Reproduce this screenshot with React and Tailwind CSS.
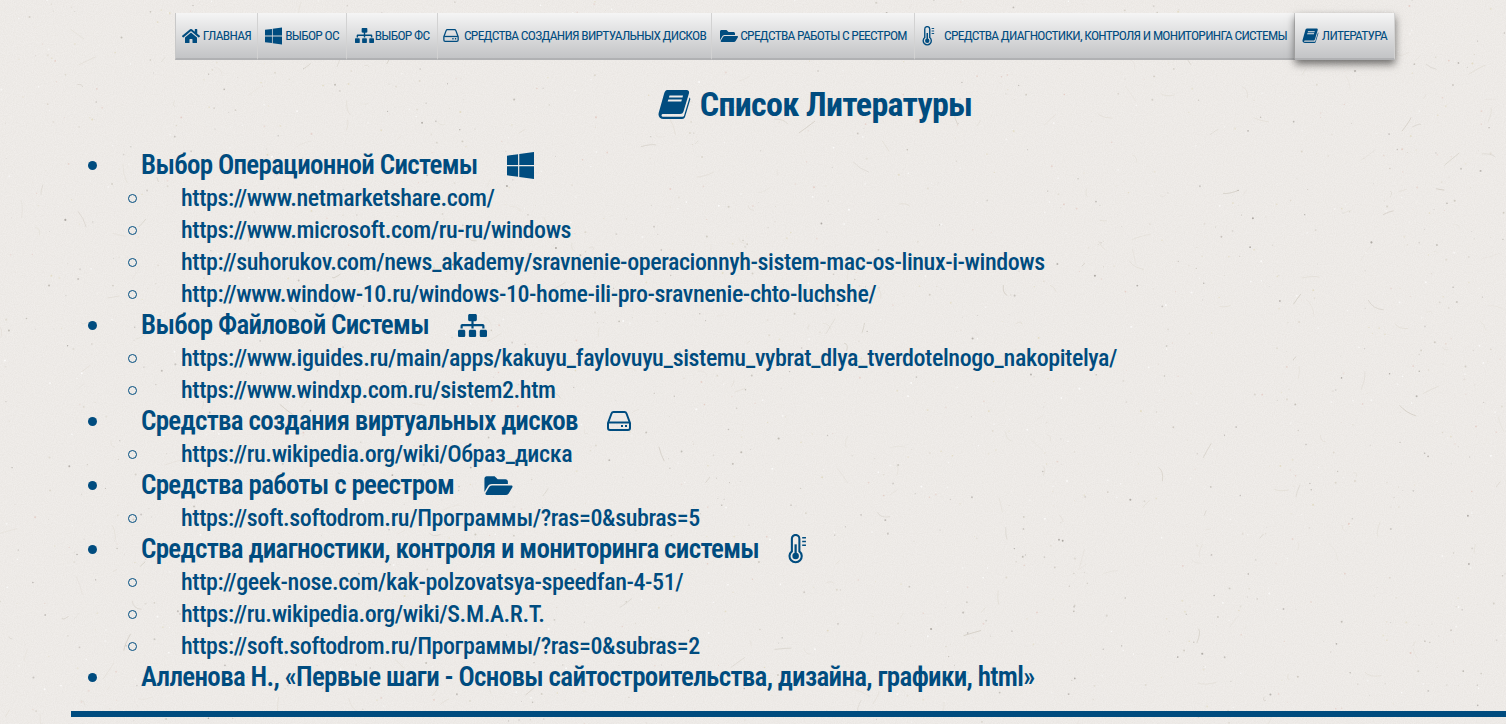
import React from "react";
import { FaHome, FaWindows, FaSitemap, FaFolderOpen } from "react-icons/fa";

const Book = ({ className }) => (
  <svg viewBox="0 0 32 30" className={className} fill="currentColor">
    <path d="M9 1h19c2 0 3 1.400 2.500 3.200L25 22.500c-.5 1.700-1.700 2.500-3.500 2.500H5c-1.200 0-2 .5-2 1.400 0 .9.800 1.300 2 1.300h19c.8 0 1.300-.4 1.600-1.200L31 8.500c.6.400 1 1.200.7 2.300L26.500 28c-.4 1.300-1.500 2-2.900 2H5C2 30 0 28 0 25.500c0-.7.100-1.300.3-2L5.500 5C6.100 2.700 7 1 9 1z" />
    <path fill="#efecea" d="M11 6.500h13.500l-.5 2H10.400zM9.800 10.500h13.600l-.6 2H9.200z" />
  </svg>
);

const Hdd = ({ className }) => (
  <svg viewBox="0 0 24 20" className={className} fill="none" stroke="currentColor">
    <path strokeWidth="2" strokeLinejoin="round" d="M1 12 4.500 2.500C4.900 1.500 5.600 1 6.500 1h11c.9 0 1.600.5 2 1.500L23 12v5c0 1.200-.8 2-2 2H3c-1.200 0-2-.8-2-2z" />
    <path strokeWidth="2" d="M1.500 11.500h21" />
    <path strokeWidth="2" d="M14 15h2M18 15h2" />
  </svg>
);

const Thermo = ({ className }) => (
  <svg viewBox="0 0 20 32" className={className} fill="none" stroke="currentColor">
    <path strokeWidth="2.200" d="M4 18.500V5a4 4 0 0 1 8 0v13.500a6.500 6.500 0 1 1-8 0z" />
    <circle cx="8" cy="23.500" r="3.500" fill="currentColor" stroke="none" />
    <path strokeWidth="2.400" d="M8 23V11" />
    <path strokeWidth="1.500" d="M15 4h4M15 8h4M15 12h4" />
  </svg>
);

function makeTexture() {
  let s = 12345;
  const r = () => ((s = (s * 16807) % 2147483647) / 2147483647);
  const specks = [];
  const fibres = [];
  const tones = ["#c9c4ba", "#d8d2c6", "#e0d8bc", "#b5b0a8", "#ffffff", "#ffffff", "#e3c8c0", "#9f9a94"];
  for (let i = 0; i < 2200; i++) {
    specks.push({ x: r() * 1506, y: r() * 724, d: 0.35 + r() * 0.7, c: tones[Math.floor(r() * tones.length)], o: 0.35 + r() * 0.5 });
  }
  for (let i = 0; i < 300; i++) {
    const x = r() * 1506, y = r() * 724, a = r() * Math.PI * 2, l = 4 + r() * 16, b = (r() - 0.5) * 8;
    const ex = x + Math.cos(a) * l, ey = y + Math.sin(a) * l;
    fibres.push({ d: `M${x.toFixed(1)} ${y.toFixed(1)}Q${((x + ex) / 2 + b).toFixed(1)} ${((y + ey) / 2 - b).toFixed(1)} ${ex.toFixed(1)} ${ey.toFixed(1)}`, c: r() > 0.3 ? "#dfdad1" : "#c9c3b8", o: 0.35 + r() * 0.45 });
  }
  return { specks, fibres };
}
const tex = makeTexture();

const Paper = () => (
  <svg className="absolute inset-0 w-full h-full" width="1506" height="724" aria-hidden="true">
    <filter id="grain">
      <feTurbulence type="fractalNoise" baseFrequency="0.9" numOctaves="2" seed="4" />
      <feColorMatrix values="0 0 0 0 0.62  0 0 0 0 0.59  0 0 0 0 0.55  0 0 0 0.35 -0.09" />
    </filter>
    <rect width="1506" height="724" filter="url(#grain)" />
    {tex.fibres.map((f, i) => (
      <path key={i} d={f.d} fill="none" stroke={f.c} strokeOpacity={f.o} strokeWidth="0.8" />
    ))}
    {tex.specks.map((p, i) => (
      <circle key={i} cx={p.x} cy={p.y} r={p.d} fill={p.c} fillOpacity={p.o} />
    ))}
  </svg>
);

const font = { fontFamily: '"Liberation Sans Narrow","Roboto Condensed","Liberation Sans",sans-serif' };

const nav = [
  { t: "Главная", w: "w-[83px]", I: FaHome, ic: "w-[18px] h-[16px]", gap: "gap-[3px]" },
  { t: "Выбор ОС", w: "w-[89px]", I: FaWindows, ic: "w-[17px] h-[20px]", gap: "gap-[3px]" },
  { t: "Выбор ФС", w: "w-[91px]", I: FaSitemap, ic: "w-[19px] h-[17px]", gap: "gap-[1px]" },
  { t: "Средства создания виртуальных дисков", w: "w-[274px]", I: Hdd, ic: "w-[16px] h-[13px]", gap: "gap-[5px]" },
  { t: "Средства работы с реестром", w: "w-[203px]", I: FaFolderOpen, ic: "w-[20px] h-[16px]", gap: "gap-[1px]" },
  { t: "Средства диагностики, контроля и мониторинга системы", w: "w-[380px]", I: Thermo, ic: "w-[13px] h-[20px]", gap: "gap-[9px]" },
  { t: "Литература", w: "w-[100px]", I: Book, ic: "w-[17px] h-[15px]", gap: "gap-[3px]", active: true },
];

const list = [
  { t: "Выбор Операционной Системы", I: FaWindows, ic: "w-[27px] h-[31px]", links: ["https://www.netmarketshare.com/", "https://www.microsoft.com/ru-ru/windows", "http://suhorukov.com/news_akademy/sravnenie-operacionnyh-sistem-mac-os-linux-i-windows", "http://www.window-10.ru/windows-10-home-ili-pro-sravnenie-chto-luchshe/"] },
  { t: "Выбор Файловой Системы", I: FaSitemap, ic: "w-[29px] h-[25px]", links: ["https://www.iguides.ru/main/apps/kakuyu_faylovuyu_sistemu_vybrat_dlya_tverdotelnogo_nakopitelya/", "https://www.windxp.com.ru/sistem2.htm"] },
  { t: "Средства создания виртуальных дисков", I: Hdd, ic: "w-[24px] h-[20px]", links: ["https://ru.wikipedia.org/wiki/Образ_диска"] },
  { t: "Средства работы с реестром", I: FaFolderOpen, ic: "w-[31px] h-[25px]", links: ["https://soft.softodrom.ru/Программы/?ras=0&subras=5"] },
  { t: "Средства диагностики, контроля и мониторинга системы", I: Thermo, ic: "w-[19px] h-[30px]", links: ["http://geek-nose.com/kak-polzovatsya-speedfan-4-51/", "https://ru.wikipedia.org/wiki/S.M.A.R.T.", "https://soft.softodrom.ru/Программы/?ras=0&subras=2"] },
  { t: "Алленова Н., «Первые шаги - Основы сайтостроительства, дизайна, графики, html»", links: [] },
];

export default function App() {
  return (
    <div style={font} className="relative h-[724px] overflow-hidden bg-[#f0edea] text-[#004c7f]">
      <Paper />
      <div className="relative">
        <nav className="ml-[175px] pt-[13px] flex w-[1220px]">
          {nav.map(({ t, w, I, ic, gap, active }, i) => (
            <div key={t} className={`${w} h-[47px] flex items-center justify-center ${gap} text-[13.5px] tracking-[-0.72px] uppercase whitespace-nowrap bg-gradient-to-b from-[#f5f5f5] to-[#c3c4c6] border-b-2 border-b-[#b0b1b3] border-r border-r-[#d2d2d2] ${i === 0 ? "border-l border-l-[#c8c8c8]" : ""} ${active ? "shadow-[0_4px_8px_rgba(0,0,0,0.55)]" : ""}`}>
              <I className={`${ic} shrink-0`} />
              <span>{t}</span>
            </div>
          ))}
        </nav>
        <h1 className="mt-[23px] h-[44px] pb-[2px] flex items-center justify-center ml-[124px] gap-[9px] text-[34px] tracking-[-0.7px] font-bold">
          <Book className="w-[33px] h-[30px]" />
          <span>Список Литературы</span>
        </h1>
        <ul className="mt-[23px] ml-[88px]">
          {list.map(({ t, I, ic, links }) => (
            <li key={t}>
              <div className="h-[32px] pb-[2px] flex items-center text-[27px] tracking-[-0.68px] font-semibold whitespace-nowrap">
                <span className="w-[9px] h-[9px] rounded-full bg-[#004c7f] mr-[44px] shrink-0" />
                <span>{t}</span>
                {I && <I className={`${ic} ml-[29px] shrink-0`} />}
              </div>
              <ul>
                {links.map((l) => (
                  <li key={l} className="h-[32px] flex items-center text-[24px] tracking-[-0.41px] font-medium whitespace-nowrap pl-[40px]">
                    <span className="w-[9px] h-[9px] rounded-full border border-[#004c7f] mr-[44px] shrink-0" />
                    <span>{l}</span>
                  </li>
                ))}
              </ul>
            </li>
          ))}
        </ul>
        <div className="ml-[71px] mt-[17px] h-[6px] bg-[#004c7f]" />
      </div>
    </div>
  );
}
